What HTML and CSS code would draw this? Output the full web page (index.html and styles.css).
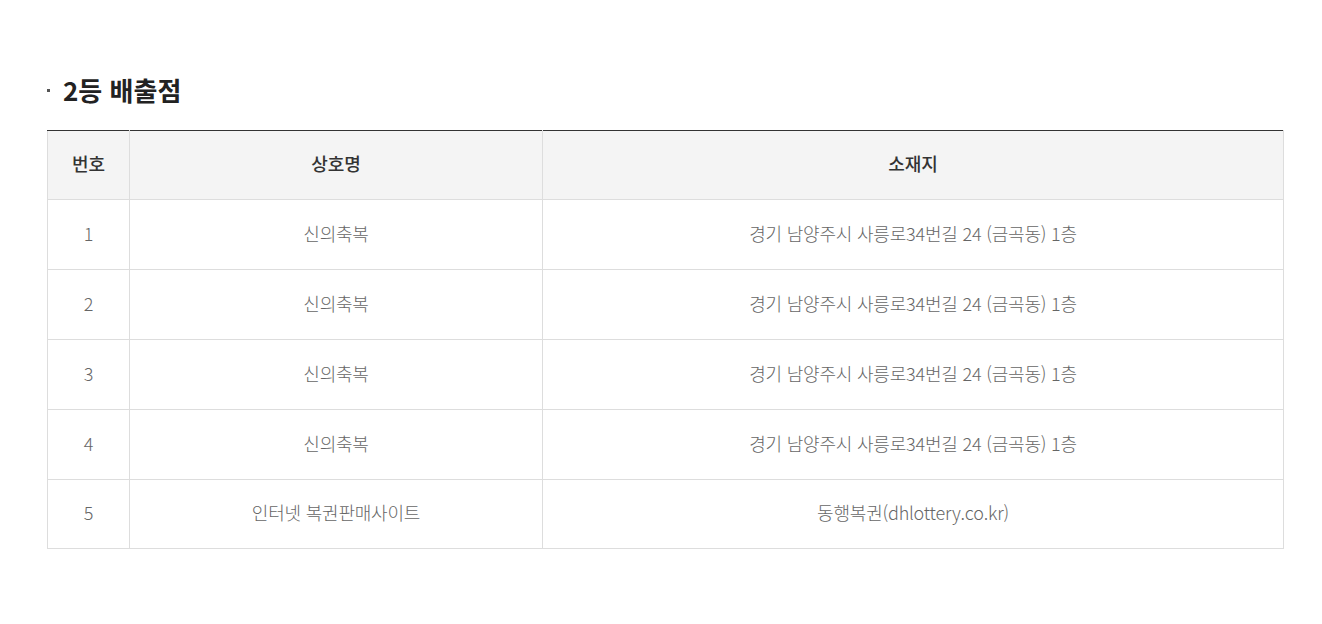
FILE: index.html
```html
<!DOCTYPE html>
<html lang="ko">
<head>
	<meta charset="UTF-8">
	<title>2등 배출점</title>
	<link rel="stylesheet" href="styles.css">
</head>
<body>
	<div class="wrapper">
		<h3 class="title">2등 배출점</h3>
		<table class="tbl">
			<colgroup>
				<col class="c-no">
				<col class="c-name">
				<col>
			</colgroup>
			<thead>
				<tr>
					<th>번호</th>
					<th>상호명</th>
					<th>소재지</th>
				</tr>
			</thead>
			<tbody>
				<tr>
					<td>1</td>
					<td>신의축복</td>
					<td>경기 남양주시 사릉로34번길 24 (금곡동) 1층</td>
				</tr>
				<tr>
					<td>2</td>
					<td>신의축복</td>
					<td>경기 남양주시 사릉로34번길 24 (금곡동) 1층</td>
				</tr>
				<tr>
					<td>3</td>
					<td>신의축복</td>
					<td>경기 남양주시 사릉로34번길 24 (금곡동) 1층</td>
				</tr>
				<tr>
					<td>4</td>
					<td>신의축복</td>
					<td>경기 남양주시 사릉로34번길 24 (금곡동) 1층</td>
				</tr>
				<tr>
					<td>5</td>
					<td>인터넷 복권판매사이트</td>
					<td>동행복권(dhlottery.co.kr)</td>
				</tr>
			</tbody>
		</table>
	</div>
</body>
</html>
```

FILE: styles.css
```css
*{
	margin: 0;
	padding: 0;
	box-sizing: border-box;
}
body{
	background: #fff;
	font-family: "Noto Sans CJK KR", "Noto Sans", sans-serif;
	color: #666;
}
.wrapper{
	width: 1237px;
	margin-left: 47px;
	padding-top: 70px;
}
.title{
	position: relative;
	padding-left: 16px;
	font-size: 26px;
	font-weight: 700;
	color: #222;
	line-height: 40px;
	margin-bottom: 20px;
}
.title::before{
	content: "";
	position: absolute;
	left: 0;
	top: 19px;
	width: 3px;
	height: 3px;
	background: #555;
}
.tbl{
	width: 100%;
	border-collapse: collapse;
	table-layout: fixed;
	border-top: 1px solid #333;
}
.tbl .c-no{
	width: 82px;
}
.tbl .c-name{
	width: 413px;
}
.tbl th,
.tbl td{
	height: 70px;
	padding-bottom: 4px;
	border: 1px solid #ddd;
	text-align: center;
	vertical-align: middle;
	font-size: 18px;
	letter-spacing: -0.2px;
}
.tbl thead th{
	border-top: 1px solid #333;
	height: 69px;
	background: #f4f4f4;
	color: #333;
	font-weight: 500;
	letter-spacing: 0;
}
.tbl td{
	font-weight: 300;
	color: #666;
}
.tbl tbody tr:last-child td{
	height: 69px;
}
```
